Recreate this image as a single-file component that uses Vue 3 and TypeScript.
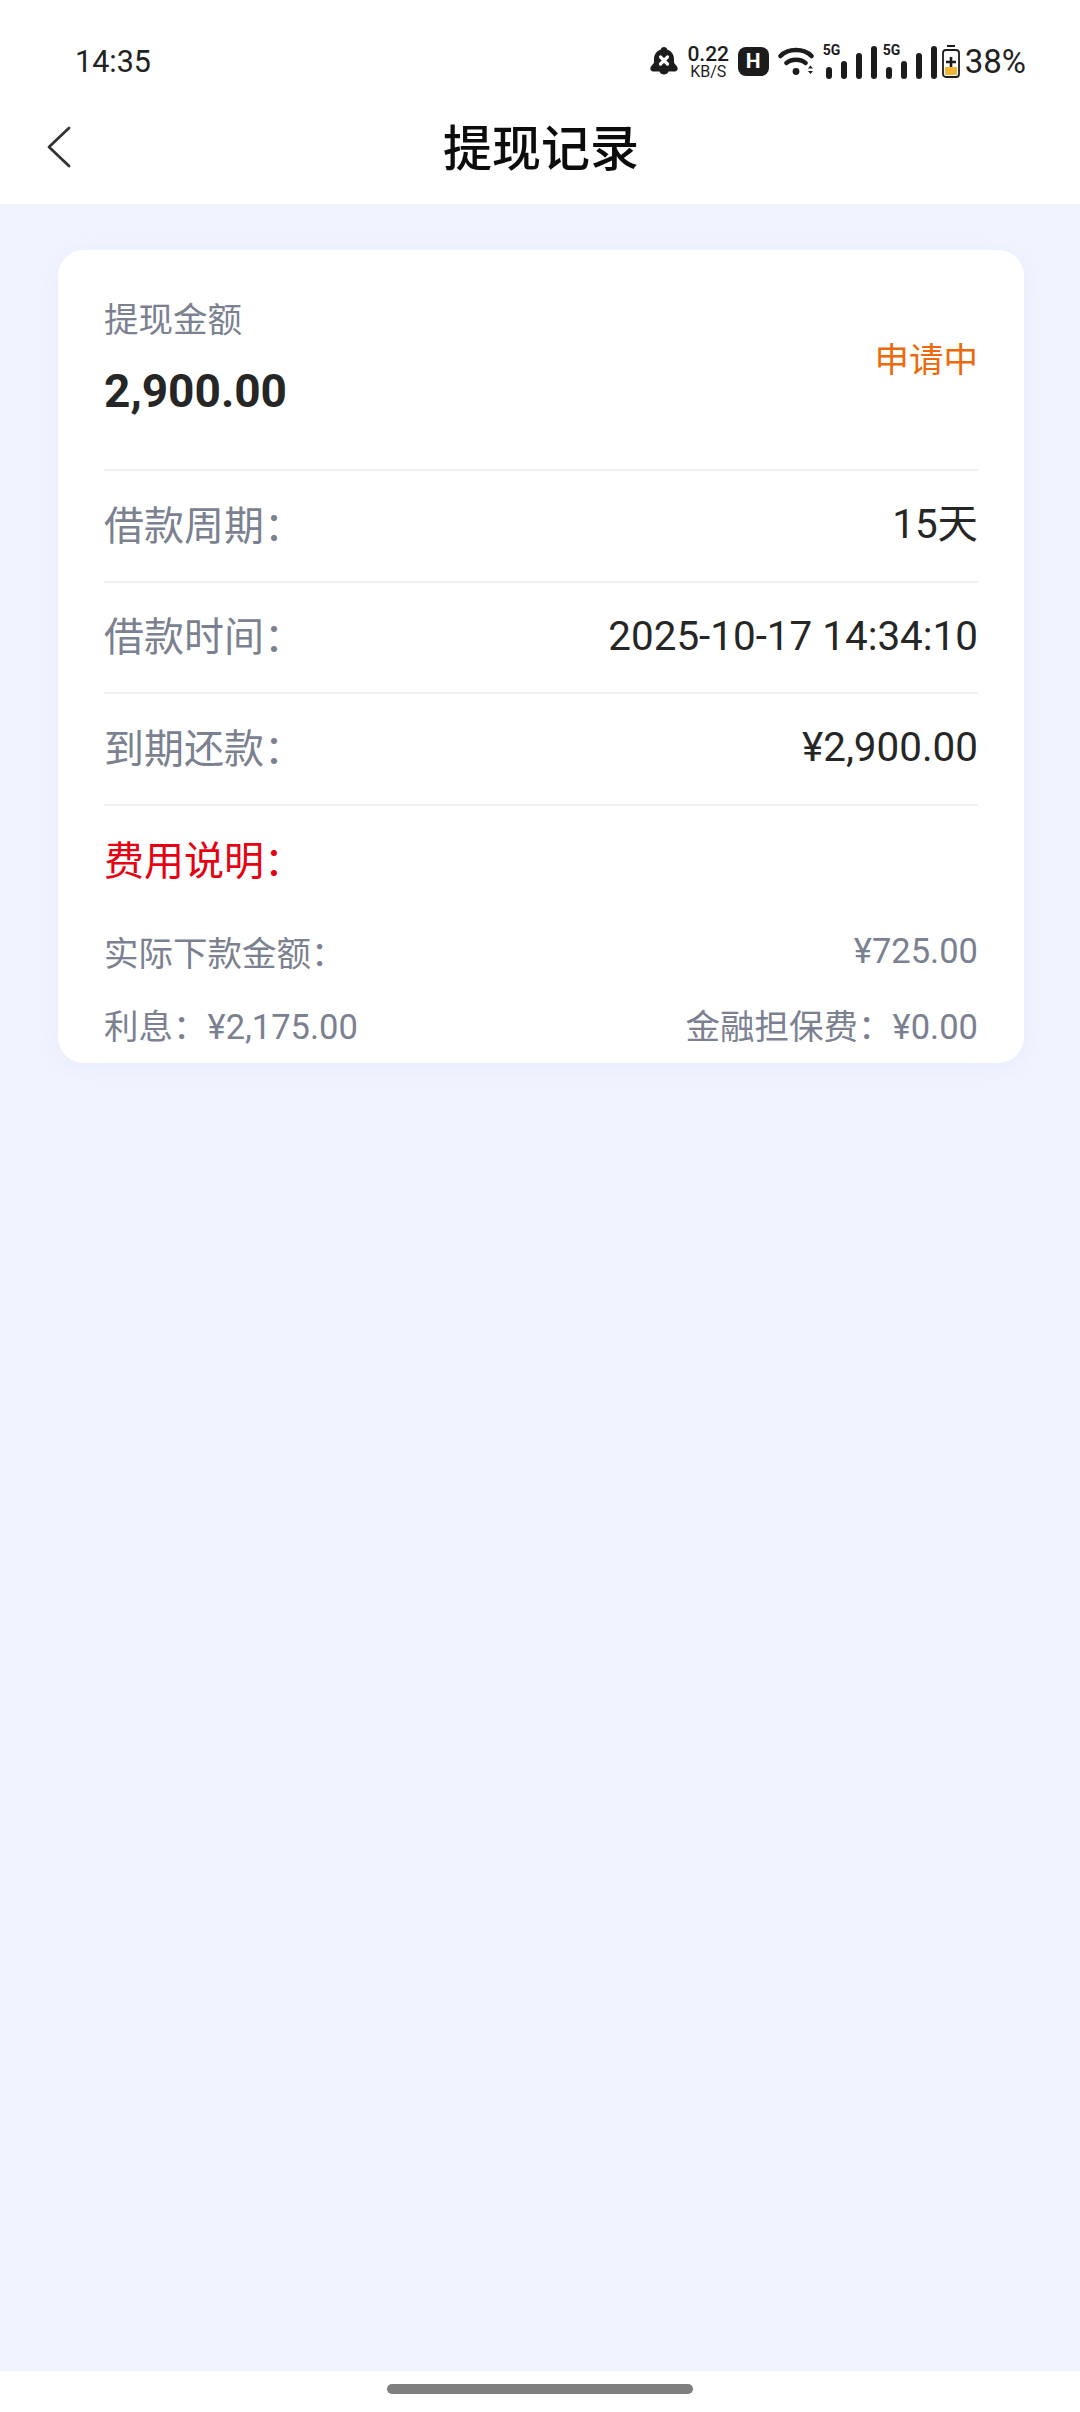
<script setup lang="ts">
interface DetailRow {
  label: string
  value: string
}

const rows: DetailRow[] = [
  { label: '借款周期：', value: '15天' },
  { label: '借款时间：', value: '2025-10-17 14:34:10' },
  { label: '到期还款：', value: '¥2,900.00' },
]

const signalBars = [12, 18, 26, 33]
</script>

<template>
  <div class="page">
    <header class="top">
      <div class="status">
        <span class="clock">14:35</span>
        <div class="status-icons">
          <svg class="bell" width="28" height="29" viewBox="0 0 28 29">
            <path d="M14 0c1.800 0 3 1.200 3.200 2.600C21.500 4 24 8 24 12v3c0 2 3 3.500 3.600 6 .4 2-1 3.500-3 3.500h-6.100c-.6 1.700-2.400 3-4.500 3s-3.900-1.300-4.500-3H3.400c-2 0-3.400-1.500-3-3.500.6-2.500 3.600-4 3.600-6v-3C4 8 6.500 4 10.800 2.600 11 1.200 12.200 0 14 0z" fill="#1c1c1c" />
            <path d="M10.500 10l7 7M17.500 10l-7 7" stroke="#fff" stroke-width="3.200" stroke-linecap="round" />
          </svg>
          <div class="speed">
            <span class="speed-num">0.22</span>
            <span class="speed-unit">KB/S</span>
          </div>
          <span class="hd">H</span>
          <svg class="wifi" width="36" height="28" viewBox="0 0 36 28">
            <path d="M2.500 9C10 1 26 1 33.500 9M8.500 16C13 11.500 23 11.500 27.500 16" fill="none" stroke="#1c1c1c" stroke-width="4.500" stroke-linecap="round" />
            <circle cx="18" cy="24.500" r="3.400" fill="#1c1c1c" />
            <path d="M30 21.500l2.500-3 2.500 3zM30 24l2.500 3 2.500-3z" fill="#1c1c1c" />
          </svg>
          <div class="signals">
            <div v-for="sim in 2" :key="sim" class="signal">
              <span class="sim-tag">5G</span>
              <i v-for="h in signalBars" :key="h" class="bar" :style="{ height: `${h}px` }" />
            </div>
          </div>
          <svg class="battery" width="18" height="33" viewBox="0 0 18 33">
            <rect x="5" y="0" width="8" height="2" fill="#1c1c1c" />
            <rect x="1" y="5" width="16" height="27" rx="3" fill="none" stroke="#1c1c1c" stroke-width="1.800" />
            <rect x="3" y="22" width="12" height="8" rx="1" fill="#f2b632" />
            <path d="M9 12v10M4 17h10" stroke="#1c1c1c" stroke-width="2.600" />
          </svg>
          <span class="percent">38%</span>
        </div>
      </div>
      <div class="nav">
        <svg class="back" width="26" height="42" viewBox="0 0 26 42">
          <path d="M23 2L3 21l20 19" fill="none" stroke="#333" stroke-width="2.800" stroke-linecap="round" stroke-linejoin="round" />
        </svg>
        <h1 class="title">提现记录</h1>
      </div>
    </header>

    <main class="content">
      <section class="card">
        <div class="summary">
          <div class="summary-main">
            <p class="summary-label">提现金额</p>
            <p class="amount">2,900.00</p>
          </div>
          <span class="state">申请中</span>
        </div>
        <div v-for="row in rows" :key="row.label" class="row">
          <span class="row-label">{{ row.label }}</span>
          <span class="row-value">{{ row.value }}</span>
        </div>
        <div class="fees">
          <p class="fees-title">费用说明：</p>
          <div class="fee-line first">
            <span>实际下款金额：</span>
            <span>¥725.00</span>
          </div>
          <div class="fee-line">
            <span>利息：¥2,175.00</span>
            <span>金融担保费：¥0.00</span>
          </div>
        </div>
      </section>
    </main>

    <footer class="gesture">
      <span class="handle" />
    </footer>
  </div>
</template>

<style scoped>
.page {
  width: 1080px;
  height: 2412px;
  display: flex;
  flex-direction: column;
  background: #f1f4fe;
  font-family: Roboto, "Noto Sans CJK SC", sans-serif;
  overflow: hidden;
}
.top {
  height: 204px;
  background: #fff;
  flex-shrink: 0;
}
.status {
  height: 102px;
  padding: 20px 54px 0 75px;
  box-sizing: border-box;
  display: flex;
  justify-content: space-between;
  align-items: center;
}
.clock {
  font-size: 30.500px;
  color: #222;
}
.status-icons {
  display: flex;
  align-items: center;
}
.speed {
  width: 41px;
  margin-left: 10px;
  display: flex;
  flex-direction: column;
  align-items: center;
  color: #1c1c1c;
}
.speed-num {
  font-size: 21px;
  font-weight: 500;
  line-height: 20px;
}
.speed-unit {
  font-size: 16px;
  line-height: 15px;
}
.hd {
  width: 31px;
  height: 29px;
  margin-left: 9px;
  border-radius: 8px;
  background: #1c1c1c;
  color: #fff;
  font-size: 21px;
  font-weight: 700;
  line-height: 29px;
  text-align: center;
}
.wifi {
  margin-left: 9px;
}
.signals {
  display: flex;
  gap: 9px;
  margin-left: 12px;
}
.signal {
  position: relative;
  display: flex;
  align-items: flex-end;
  gap: 9px;
  height: 36px;
}
.sim-tag {
  position: absolute;
  left: -3px;
  top: 0;
  font-size: 14px;
  line-height: 14px;
  font-weight: 700;
  color: #1c1c1c;
}
.bar {
  width: 6px;
  border-radius: 3px;
  background: #1c1c1c;
}
.battery {
  margin-left: 5px;
}
.percent {
  margin-left: 5px;
  font-size: 33px;
  color: #222;
}
.nav {
  position: relative;
  height: 102px;
  padding: 0 0 18px 2px;
  box-sizing: border-box;
  display: flex;
  align-items: center;
  justify-content: center;
}
.back {
  position: absolute;
  left: 46px;
  top: 24px;
}
.title {
  margin: 0;
  font-size: 49px;
  font-weight: 500;
  color: #0c0c0c;
}
.content {
  flex: 1;
  padding: 46px 56px 0 58px;
}
.card {
  background: #fff;
  border-radius: 26px;
  padding: 0 46px;
  height: 813px;
  box-sizing: border-box;
  overflow: hidden;
  box-shadow: 0 4px 20px rgba(210, 220, 250, 0.35);
}
.summary {
  height: 219px;
  padding-bottom: 5px;
  box-sizing: border-box;
  display: flex;
  align-items: center;
  justify-content: space-between;
}
.summary-main {
  padding-bottom: 5px;
}
.summary-label {
  margin: 0 0 22px;
  font-size: 34.500px;
  color: #7b8190;
}
.amount {
  margin: 0;
  font-size: 46px;
  font-weight: 700;
  color: #262626;
}
.state {
  font-size: 34.500px;
  color: #ec6a0c;
}
.row {
  height: 111.500px;
  padding-bottom: 1px;
  box-sizing: border-box;
  border-top: 2px solid #f0f0f2;
  display: flex;
  align-items: center;
  justify-content: space-between;
  font-size: 40px;
}
.row-label {
  padding-bottom: 5px;
  color: #7b8190;
}
.row-value {
  font-size: 40.400px;
  line-height: 48px;
  color: #262626;
}
.fees {
  border-top: 2px solid #f0f0f2;
  padding-top: 23px;
}
.fees-title {
  margin: 0;
  font-size: 40px;
  color: #e60012;
}
.fee-line {
  display: flex;
  align-items: baseline;
  justify-content: space-between;
  margin-top: 23px;
  font-size: 34.500px;
  color: #7b8190;
}
.fee-line.first {
  align-items: center;
  margin-top: 39px;
}
.gesture {
  height: 41px;
  background: #fff;
  flex-shrink: 0;
  display: flex;
  justify-content: center;
  padding-top: 13px;
  box-sizing: border-box;
}
.handle {
  width: 306px;
  height: 10px;
  border-radius: 5px;
  background: #7f7f7f;
}
</style>
